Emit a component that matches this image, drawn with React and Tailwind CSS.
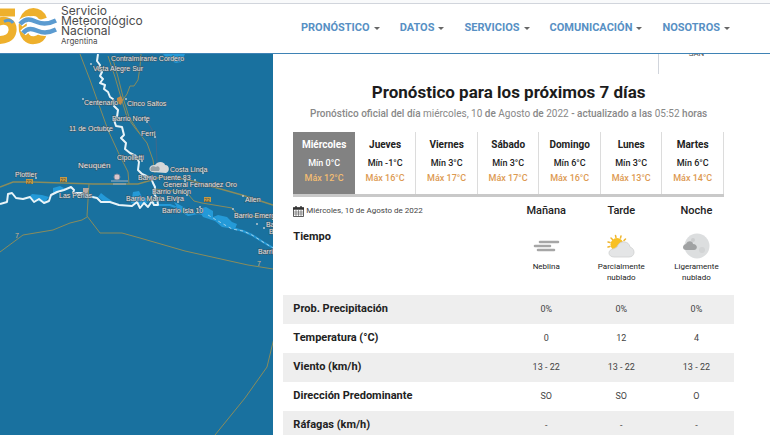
import { useState } from 'react';

const NAV_ITEMS = ['PRONÓSTICO', 'DATOS', 'SERVICIOS', 'COMUNICACIÓN', 'NOSOTROS'];

const DAYS = [
    { name: 'Miércoles', min: 0, max: 12 },
    { name: 'Jueves', min: -1, max: 16 },
    { name: 'Viernes', min: 3, max: 17 },
    { name: 'Sábado', min: 3, max: 17 },
    { name: 'Domingo', min: 6, max: 16 },
    { name: 'Lunes', min: 3, max: 13 },
    { name: 'Martes', min: 6, max: 14 },
];

const ROWS = [
    { label: 'Prob. Precipitación', values: ['0%', '0%', '0%'] },
    { label: 'Temperatura (°C)', values: ['0', '12', '4'] },
    { label: 'Viento (km/h)', values: ['13 - 22', '13 - 22', '13 - 22'] },
    { label: 'Dirección Predominante', values: ['SO', 'SO', 'O'] },
    { label: 'Ráfagas (km/h)', values: ['-', '-', '-'] },
];

const PLACES = [
    { name: 'Contralmirante Cordero', x: 111, y: 61 },
    { name: 'Vista Alegre Sur', x: 93, y: 71, dot: [91, 64] },
    { name: 'Centenario', x: 84, y: 105, dot: [83, 99] },
    { name: 'Cinco Saltos', x: 127, y: 106, dot: [126, 99] },
    { name: 'Barrio Norte', x: 112, y: 121, dot: [147, 122] },
    { name: '11 de Octubre', x: 69, y: 131, dot: [109, 131] },
    { name: 'Ferri', x: 141, y: 136, dot: [155, 137] },
    { name: 'Cipolletti', x: 117, y: 160, dot: [142, 161] },
    { name: 'Plottier', x: 15, y: 177, dot: [36, 178] },
    { name: 'Costa Linda', x: 170, y: 172, dot: [203, 173] },
    { name: 'Barrio Puente 83', x: 138, y: 180, dot: [185, 181] },
    { name: 'General Fernandez Oro', x: 163, y: 187, dot: [195, 180] },
    { name: 'Barrio Unión', x: 152, y: 194, dot: [187, 195] },
    { name: 'Las Perlas', x: 59, y: 198 },
    { name: 'Barrio María Elvira', x: 126, y: 201, dot: [178, 202] },
    { name: 'Barrio Isla 10', x: 162, y: 213, dot: [200, 207] },
    { name: 'Allen', x: 245, y: 202, dot: [243, 196] },
    { name: 'Barrio Emergente', x: 234, y: 218, dot: [233, 209] },
    { name: 'Barrio Norte', x: 266, y: 227, dot: [257, 224] },
    { name: 'Barrio Mar', x: 269, y: 234, dot: [264, 228] },
    { name: 'Barrio Blanco', x: 258, y: 254 },
];

function Logo() {
    return (
        <svg width="57" height="40" viewBox="0 4 57 40" fill="none" aria-hidden="true">
            <g stroke="#eeb02c" strokeWidth="8">
                <path d="M-2 10.500H15" />
                <path d="M-3 20.500C6 16 13.500 21 12.500 29C11.500 36 5 38.500-3 38" />
                <path d="M43 17C40 8 27 7 23.500 18C22 24 22.500 31 26.500 35.500C31 40 41 39 43 31" />
            </g>
            <g stroke="#fff" strokeWidth="7">
                <path d="M20 22C27 15 32 18 37 20C43 22.500 49 22 56 18.500" />
                <path d="M23 31C28 25 33 27 38 29C44 31.500 49 31 56 27.500" />
            </g>
            <g stroke="#5b9bd0" strokeWidth="4.500">
                <path d="M20 22C27 15 32 18 37 20C43 22.500 49 22 56 18.500" />
                <path d="M23 31C28 25 33 27 38 29C44 31.500 49 31 56 27.500" />
            </g>
            <path d="M4 19.500C8 17.500 11 17.500 13 21" stroke="#5b9bd0" strokeWidth="3" />
        </svg>
    );
}

function Shield({ x, y, children }) {
    return (
        <g>
            <rect x={x - 3} y={y - 3} width="7" height="5" fill="#c49a45" />
            <text x={x} y={y + 2} fontSize="5" fill="#4d4a3c" textAnchor="middle">{children}</text>
        </g>
    );
}

function ForecastMap() {
    return (
        <svg
            className="w-full bg-[#19719f] font-['Liberation_Sans',sans-serif]"
            role="img"
            aria-label="Mapa de Neuquén"
        >
            <g transform="translate(0 -54)">
                {/* reservoirs and wide river stretches */}
                <g fill="#249ad8">
                    <path d="M163 54H185L181 62L176 63L168 60Z" />
                    <path d="M53 193V188L60 186L66 189L58 192Z" />
                    <path d="M28 198L32 194L42 195L49 197L45 202L36 201Z" />
                    <path d="M98 197L101 193L106 197L112 201L103 201Z" />
                    <path d="M131 203L133 192L139 191L142 197L152 199L157 204L150 201L143 205Z" />
                    <path d="M174 202L180 205L190 211L187 215L180 212Z" />
                    <path d="M198 209L206 207L213 211V217L218 215L227 217L232 222L237 224L235 229L222 227L215 221L203 217Z" />
                </g>
                <g fill="none" stroke="#8a8c5c" strokeWidth="1">
                    <path d="M80 54L90 80L108 130L119 154L128 172L129 184" />
                    <path d="M108 56L115 77L122 101L127 117L135 128L147 143L153 160L155 173" />
                    <path d="M112 56L118 77L124 101L129 117L140 134" />
                    <path d="M141 54L140 67L138 80L134 86L130 86L127 94L122 101" />
                    <path d="M0 187L13 182L32 182L93 184H138L152 180L160 177L185 179L242 195L273 205L340 228" strokeWidth="1.500" />
                    <path d="M155 189L174 191L188 194L194 201L202 203L232 208L238 215L273 218H340" />
                    <path d="M89 184L87 216L100 233H122L140 238L185 251L248 265L273 269L340 282" />
                    <path d="M87 217L82 220L70 223L53 230L23 235L0 252" />
                    <path d="M274 338L267 367L245 398L215 435L190 466" />
                    <path d="M144 118L149 124L156 137L157 163" stroke="#42698a" />
                </g>
                {/* rivers */}
                <g fill="none" strokeLinejoin="round">
                    <path d="M156 205H170L178 208L188 215L198 213L208 215L218 221L232 228L243 231L252 235L263 242L273 248" stroke="#249ad8" strokeWidth="2" />
                    <path d="M208 215L218 221L232 229L243 231L252 235L263 242L273 248" stroke="#9ecfe8" strokeDasharray="3 3" strokeWidth="1" />
                    <path
                        d="M98 54L97 61L100 65L98 69L102 72L100 76L103 79L100 83L105 85L104 89L108 92L110 97L113 99L114 106L118 110L117 117L114 120L116 126L122 127L124 135L121 138L126 143L125 149L130 153L136 156L139 162L138 170L142 174L151 178L153 183L155 187L154 194L157 198L158 205L154 205L152 201L148 207L144 203L140 208L137 202L132 206L119 205L110 202L101 202L97 198L88 196L84 194"
                        stroke="#e9f4f8"
                        strokeWidth="2"
                    />
                    <path
                        d="M0 204L7 202L8 194L12 193L16 198L23 199L30 197L34 202L39 199L44 203L49 201L51 195L57 192L64 190L71 187L74 190L73 193L81 193L88 195"
                        stroke="#e9f4f8"
                        strokeWidth="2"
                    />
                </g>
                <path d="M117 98L121 96L123 100L121 105L117 103Z" fill="#c28b4a" />
                <Shield x={29} y={182}>22</Shield>
                <Shield x={63} y={180}>22</Shield>
                <Shield x={207} y={200}>22</Shield>
                <path d="M83 188H89L87 195H83Z" fill="#b6a7a1" />
                <path d="M111 181H128M113 184H126" stroke="#a3b3c2" strokeWidth="1" />
                <circle cx="117" cy="177" r="3" fill="#d9c6cc" stroke="#7f8ca0" />
                <g fontSize="7" fill="#d3b48c">
                    <text x="15" y="238">7</text>
                    <text x="257" y="266">7</text>
                </g>
                {/* weather marker over the city */}
                <path d="M152 172C147 170 150 164 155 165C158 160 165 162 165 165C170 165 170 172 166 173Z" fill="#d5d7d8" />
                <path d="M151 171C149 167 153 165 156 167C158 165 161 168 159 171Z" fill="#98a2a6" />
                <g fontSize="7" fill="#e4e7e8" stroke="#3d5260" strokeWidth="1" paintOrder="stroke">
                    {PLACES.map((place) => (
                        <text key={`${place.name}-${place.y}`} x={place.x} y={place.y}>{place.name}</text>
                    ))}
                    <text x="78" y="168" fontSize="8">Neuquén</text>
                </g>
                <g fill="#b9c7ce">
                    {PLACES.filter((place) => place.dot).map((place) => (
                        <circle key={`${place.name}-${place.y}`} cx={place.dot[0]} cy={place.dot[1]} r="1" />
                    ))}
                </g>
            </g>
        </svg>
    );
}

function FogIcon() {
    return (
        <svg width="28" height="28" viewBox="0 0 28 28" stroke="#a6a6a6" strokeWidth="2.600" strokeLinecap="round" aria-hidden="true">
            <path d="M8 9H26M3 13H18M6 17H22" />
        </svg>
    );
}

function PartlyCloudyIcon() {
    return (
        <svg width="28" height="28" viewBox="0 0 28 28" aria-hidden="true">
            <path
                d="M1 14L3 13.500M1 9L3 9.500M4 5L5.500 6.500M8.500 2.500L9 4.500M14 3L13.500 5M18.500 6L17 7.500"
                stroke="#efb52e"
                strokeWidth="1.500"
                strokeLinecap="round"
            />
            <circle cx="10" cy="11.500" r="6.500" fill="#f8c023" />
            <path
                d="M7 24C1 24 0 17 6 16C8 15 10 15 11 12C14 7 22 8 23 14C29 16 28 24 22 24Z"
                fill="#e4e5e6"
                stroke="#cfd0d1"
                strokeWidth="0.800"
            />
        </svg>
    );
}

function NightCloudIcon() {
    return (
        <svg width="28" height="28" viewBox="0 0 28 28" aria-hidden="true">
            <circle cx="15" cy="13" r="12.500" fill="#dcdedf" />
            <circle cx="11" cy="7" r="2" fill="#cbcdce" />
            <circle cx="20" cy="17" r="3" fill="#d2d4d5" />
            <path d="M4 17C0 17 0 12 4 11C6 7 11 8 11 11C16 11 16 17 12 17Z" fill="#a0a2a3" />
        </svg>
    );
}

function CalendarIcon() {
    return (
        <svg width="11" height="11" viewBox="0 0 11 11" fill="none" stroke="#333" aria-hidden="true">
            <path d="M0.500 2H10.500V10.500H0.500Z" strokeWidth="0.800" />
            <path d="M0 2.500H11" strokeWidth="2.500" />
            <path d="M3 4V10M5.500 4V10M8 4V10M1 6H10M1 8H10" strokeWidth="0.500" />
            <path d="M3 0V2M8 0V2" strokeWidth="1.400" />
        </svg>
    );
}

const PERIODS = [
    { name: 'Mañana', sky: 'Neblina', Icon: FogIcon },
    { name: 'Tarde', sky: 'Parcialmente nublado', Icon: PartlyCloudyIcon },
    { name: 'Noche', sky: 'Ligeramente nublado', Icon: NightCloudIcon },
];

function Header() {
    return (
        <header className="relative z-10 border-b border-[#3f83b5] bg-white">
            <div className="h-1 border-b border-gray-300 bg-gray-50" />
            <div className="flex h-[49px] items-center">
                <a href="#inicio" className="flex shrink-0 items-center gap-1 pb-1.5">
                    <Logo />
                    <span className="flex flex-col font-['Inter',sans-serif] text-xs leading-[10px] text-[#4c4c4c]">
                        <span>Servicio</span>
                        <span>Meteorológico</span>
                        <span>Nacional</span>
                        <span className="text-[8px]">Argentina</span>
                    </span>
                </a>
                <nav className="ml-auto flex gap-5 pr-10">
                    {NAV_ITEMS.map((item) => (
                        <button key={item} type="button" className="flex items-center gap-1 text-[11px] font-bold text-[#5790c4]">
                            {item}
                            <svg width="6" height="3" viewBox="0 0 6 3" aria-hidden="true">
                                <path d="M0 0H6L3 3Z" fill="#666" />
                            </svg>
                        </button>
                    ))}
                </nav>
            </div>
        </header>
    );
}

export default function App() {
    const [selected, setSelected] = useState(0);

    return (
        <div className="flex min-h-screen flex-col bg-white font-['Roboto',sans-serif] text-[#222]">
            <Header />
            <main className="flex grow">
                <section className="flex w-[35.5%] shrink-0">
                    <ForecastMap />
                </section>

                <section className="grow pr-9 pl-[10px]">
                    {/* tail of the previous block, runs under the header */}
                    <div className="flex h-5 justify-end">
                        <div className="w-[76px] border-l border-gray-300 text-center text-[8px] leading-none text-[#555]">
                            <p className="-mt-1">SAN</p>
                        </div>
                    </div>

                    <h1 className="mt-2 text-center text-[17px] leading-5 font-bold text-[#1c1c1c]">
                        Pronóstico para los próximos 7 días
                    </h1>
                    <p className="mt-1 text-center text-[10px] leading-4 text-[#888]">
                        <b className="font-medium">Pronóstico oficial del día</b> miércoles, 10 <b className="font-medium">de</b> Agosto{' '}
                        <b className="font-medium">de</b> 2022 <b className="font-medium">- actualizado a las</b> 05:52{' '}
                        <b className="font-medium">horas</b>
                    </p>

                    <div className="mx-[10px] mt-[10px] grid grid-cols-7 border-b-3 border-[#c9c9c9]">
                        {DAYS.map((day, i) => (
                            <button
                                key={day.name}
                                type="button"
                                aria-pressed={i === selected}
                                onClick={() => setSelected(i)}
                                className={
                                    i === selected
                                        ? 'flex h-[62px] flex-col items-center bg-[#828282] pt-1 text-white'
                                        : 'flex h-[62px] flex-col items-center border-r border-[#dcdcdc] pt-1'
                                }
                            >
                                <span className="text-[10px] leading-[18px] font-bold">{day.name}</span>
                                <span className="text-[9px] leading-[18px] font-medium">Mín {day.min}°C</span>
                                <span className={i === selected ? 'text-[9px] leading-3 font-medium text-[#f3bd72]' : 'text-[9px] leading-3 font-medium text-[#dd9a52]'}>
                                    Máx {day.max}°C
                                </span>
                            </button>
                        ))}
                    </div>

                    <table className="w-full table-fixed">
                        <thead>
                            <tr className="h-7">
                                <th className="w-1/2 px-[10px] text-left font-normal">
                                    <span className="flex items-center gap-[2px] text-[8px] text-[#444]">
                                        <CalendarIcon />
                                        Miércoles, 10 de Agosto de 2022
                                    </span>
                                </th>
                                {PERIODS.map((period) => (
                                    <th key={period.name} className="text-[11px] font-medium">{period.name}</th>
                                ))}
                            </tr>
                        </thead>
                        <tbody>
                            <tr className="h-[70px]">
                                <th className="px-[10px] pt-1 text-left align-top text-[11px] font-bold">Tiempo</th>
                                {PERIODS.map(({ name, sky, Icon }) => (
                                    <td key={name} className="px-1 pt-2 text-center align-top text-[8px] leading-[11px]">
                                        <span className="flex flex-col items-center">
                                            <Icon />
                                            {sky}
                                        </span>
                                    </td>
                                ))}
                            </tr>
                            {ROWS.map((row) => (
                                <tr key={row.label} className="h-[29px] even:bg-[#eeeeee]">
                                    <th className="px-[10px] text-left text-[11px] font-bold">{row.label}</th>
                                    {row.values.map((value, i) => (
                                        <td key={i} className="text-center text-[9px] text-[#444]">{value}</td>
                                    ))}
                                </tr>
                            ))}
                        </tbody>
                    </table>
                </section>
            </main>
        </div>
    );
}
